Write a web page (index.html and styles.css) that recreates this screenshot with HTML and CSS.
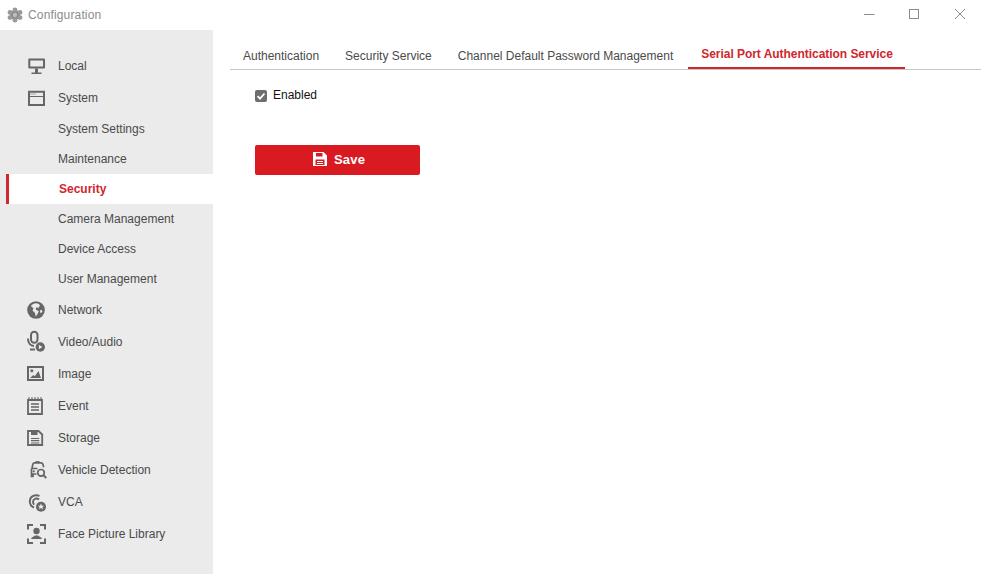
FILE: index.html
```html
<!DOCTYPE html>
<html lang="en">
<head>
<meta charset="utf-8">
<title>Configuration</title>
<link rel="stylesheet" href="styles.css">
</head>
<body>
<header class="titlebar">
  <div class="app-title">
    <svg class="app-logo" viewBox="0 0 16 16" width="16" height="16"><circle cx="8" cy="8" r="5" fill="#8a8a8a"/><g fill="#9a9a9a"><circle cx="8" cy="2.800" r="2.400"/><circle cx="8" cy="13.200" r="2.400"/><circle cx="3" cy="5.400" r="2.400"/><circle cx="13" cy="5.400" r="2.400"/><circle cx="3" cy="10.600" r="2.400"/><circle cx="13" cy="10.600" r="2.400"/></g><circle cx="8" cy="8" r="2.200" fill="#bdbdbd"/></svg>
    <span>Configuration</span>
  </div>
  <div class="win-controls">
    <svg viewBox="0 0 12 12" width="12" height="12"><path d="M2 5.500h10.500" stroke="#8c8c8c" fill="none"/></svg>
    <svg viewBox="0 0 12 12" width="12" height="12"><rect x="1.500" y="0.500" width="9" height="9" stroke="#8c8c8c" fill="none"/></svg>
    <svg viewBox="0 0 12 12" width="12" height="12"><path d="M1 0l10 10M11 0L1 10" stroke="#8c8c8c" fill="none"/></svg>
  </div>
</header>
<div class="main">
  <nav class="sidebar">
    <a class="item"><svg class="ico" viewBox="0 0 18 18"><path d="M2.300 2.500H17v8H2.300z" fill="none" stroke="#666" stroke-width="2" stroke-linejoin="round"/><path d="M8 11.500h3v4H8zM4.500 15.500h10V17h-10z" fill="#666"/></svg>Local</a>
    <a class="item"><svg class="ico" viewBox="0 0 18 18"><path d="M2 2.700h15V16H2z" fill="none" stroke="#666" stroke-width="2"/><path d="M1 7.500h16" stroke="#666" stroke-width="1"/><path d="M3.500 5h1M5.500 5h1M7.500 5h1" stroke="#666"/></svg>System</a>
    <a class="sub">System Settings</a>
    <a class="sub">Maintenance</a>
    <a class="sub active">Security</a>
    <a class="sub">Camera Management</a>
    <a class="sub">Device Access</a>
    <a class="sub">User Management</a>
    <a class="item"><svg class="ico" viewBox="0 0 18 18"><circle cx="9" cy="9" r="8.800" fill="#666"/><path d="M9.500 2.200C7 2.200 5 3.300 3.800 5l2.700 2.300L5.500 9.500l2.500 2.500.8 3.800 2-3.300 1-2.200-3-1.800.5-2.200 2.200.8 1.500-2.800C12 3 10.800 2.200 9.500 2.200zM14.500 8.500l-1.700 1.300 1 2.700 1.700-2z" fill="#ebebeb"/></svg>Network</a>
    <a class="item"><svg class="ico" viewBox="0 0 18 18"><rect x="4" y="-1.200" width="6.500" height="11" rx="3.200" fill="none" stroke="#666" stroke-width="2"/><path d="M1 5.500c0 4.500 2.500 7.500 6 7.500M3 16.500h5" fill="none" stroke="#666" stroke-width="2"/><circle cx="13.300" cy="14" r="4.700" fill="#666"/><path d="M11.900 11.800v4.400l3.500-2.200z" fill="#ebebeb"/></svg>Video/Audio</a>
    <a class="item"><svg class="ico" viewBox="0 0 18 18"><path d="M1 2h15v13H1z" fill="none" stroke="#666" stroke-width="2"/><circle cx="4.800" cy="5.800" r="1.500" fill="#666"/><path d="M3 13l3.300-3 1.500 1.300 3.700-5.300 2.500 7z" fill="#666"/></svg>Image</a>
    <a class="item"><svg class="ico" viewBox="0 0 18 18"><path d="M1 3h14v14H1z" fill="none" stroke="#666" stroke-width="1.800"/><path d="M2 .3v2M5 .3v2M8 .3v2M11 .3v2M14 .3v2" stroke="#666" stroke-width="1.200"/><path d="M4 7h8M4 10h8M4 13h8" stroke="#666" stroke-width="1.300"/></svg>Event</a>
    <a class="item"><svg class="ico" viewBox="0 0 18 18"><path d="M1 2h10.500L15.200 5.500V16H1z" fill="none" stroke="#666" stroke-width="1.800"/><path d="M4 2h6.500v4H4z" fill="#666"/><path d="M4 9.500h8.300M4 11.700h8.300M4 14h8.300" stroke="#666" stroke-width="1.200"/></svg>Storage</a>
    <a class="item"><svg class="ico" viewBox="0 0 18 18"><g transform="translate(1.500 0)"><path d="M3.500 7.500l.8-4c.2-1 .8-1.700 1.800-1.700h6.500c1 0 1.500.5 1.800 1.500l.8 3M3 7.500h6M3 7.500V13h5M4.500 13v2.500H3V13" fill="none" stroke="#666" stroke-width="1.700"/><path d="M7 .8h4" stroke="#666" stroke-width="1.400"/><circle cx="5.300" cy="10.300" r="1.100" fill="#666"/><circle cx="12.500" cy="11.800" r="3.300" fill="none" stroke="#666" stroke-width="1.700"/><path d="M14.800 14l3 3" stroke="#666" stroke-width="1.900"/></g></svg>Vehicle Detection</a>
    <a class="item"><svg class="ico" viewBox="0 0 18 18"><g transform="translate(1 1)"><path d="M11.500 2C7.500 0 2 2 1.800 7c-.1 3 1.700 5.500 4.200 6.500M11 5.500C8.500 3.500 5 4.800 5 8c0 1 .5 2 1.200 2.700" fill="none" stroke="#666" stroke-width="1.900"/><circle cx="13" cy="12.800" r="5" fill="#666"/><path d="M13 9.600l1 2.100h2.200l-1.800 1.500.7 2.200-2.100-1.300-2.100 1.300.7-2.200-1.800-1.500H12z" fill="#ebebeb"/></g></svg>VCA</a>
    <a class="item"><svg class="ico" viewBox="0 0 18 18"><path d="M1 4.500V0h5M13 0h5v4.500M1 13.500V18h5M13 18h5v-4.500" fill="none" stroke="#666" stroke-width="2"/><circle cx="9.500" cy="6" r="3.200" fill="#666"/><path d="M4 14c.3-2 3-2.500 4-3.500h3c1 1 3.700 1.500 4 3.500z" fill="#666"/></svg>Face Picture Library</a>
  </nav>
  <section class="content">
    <div class="tabs">
      <a class="tab">Authentication</a>
      <a class="tab">Security Service</a>
      <a class="tab">Channel Default Password Management</a>
      <a class="tab active">Serial Port Authentication Service</a>
    </div>
    <div class="form">
      <label class="check"><span class="box"><svg viewBox="0 0 12 12" width="12" height="12"><path d="M2.500 6.200l2.500 2.500 4.500-5.200" fill="none" stroke="#fff" stroke-width="1.800"/></svg></span>Enabled</label>
      <button class="save" type="button"><svg viewBox="0 0 14 14" width="14" height="14"><path fill-rule="evenodd" d="M0 0h10.500L14 3.500V14H0zM3 1v3.500h6.500V1zM2.500 7.500V13h9V7.500zM4 9h6v1H4zM4 11h6v1H4z" fill="#fff"/></svg>Save</button>
    </div>
  </section>
</div>
</body>
</html>
```
FILE: styles.css
```css
* { box-sizing: border-box; }
html, body { margin: 0; height: 100%; }
body {
  width: 981px;
  height: 574px;
  overflow: hidden;
  background: #fff;
  font-family: "Liberation Sans", Arial, sans-serif;
  font-size: 12px;
  display: flex;
  flex-direction: column;
}
.titlebar {
  height: 30px;
  flex: none;
  display: flex;
  justify-content: space-between;
  align-items: center;
  padding-left: 7px;
}
.app-title { display: flex; align-items: center; gap: 5px; color: #8c8c8c; letter-spacing: 0.15px; }
.win-controls { display: flex; gap: 34px; padding-right: 15px; }
.win-controls svg { overflow: visible; }
.main { flex: 1; display: flex; min-height: 0; }
.sidebar {
  width: 213px;
  flex: none;
  background: #ebebeb;
  padding: 20px 0 0 6px;
  display: flex;
  flex-direction: column;
  color: #4a4a4a;
}
.item {
  height: 32px;
  display: flex;
  align-items: center;
  padding-left: 21px;
  gap: 13px;
}
.ico { width: 18px; height: 18px; flex: none; overflow: visible; }
.sub {
  height: 30px;
  display: flex;
  align-items: center;
  padding-left: 52px;
}
.sub.active {
  background: #fff;
  border-left: 3px solid #d0262e;
  padding-left: 50px;
  color: #d0262e;
  font-weight: 700;
}
.content { flex: 1; padding-left: 17px; min-width: 0; }
.tabs {
  height: 40px;
  border-bottom: 1px solid #c8c8c8;
  display: flex;
  padding-top: 12px;
}
.tab {
  padding: 7px 13px 0;
  color: #4a4a4a;
  height: 27px;
  margin-bottom: -1px;
}
.tab.active {
  color: #d0262e;
  font-weight: 700;
  letter-spacing: -0.04px;
  margin-left: 2px;
  width: 217px;
  white-space: nowrap;
  padding-top: 5px;
  border-bottom: 2px solid #d0262e;
}
.form { padding: 17px 0 0 25px; }
.check {
  display: flex;
  align-items: flex-start;
  gap: 6px;
  height: 15px;
  line-height: 16px;
  color: #111;
}
.box {
  width: 12px;
  height: 12px;
  margin-top: 3px;
  background: #6e6e6e;
  border-radius: 2px;
  display: flex;
}
.save {
  margin-top: 43px;
  width: 165px;
  height: 30px;
  border: 0;
  border-radius: 2px;
  background: #da1a21;
  color: #fff;
  font: 700 13px "Liberation Sans", Arial, sans-serif;
  letter-spacing: 0.2px;
  display: flex;
  align-items: center;
  justify-content: center;
  gap: 7px;
  padding: 0 0 2px 3px;
}
```
